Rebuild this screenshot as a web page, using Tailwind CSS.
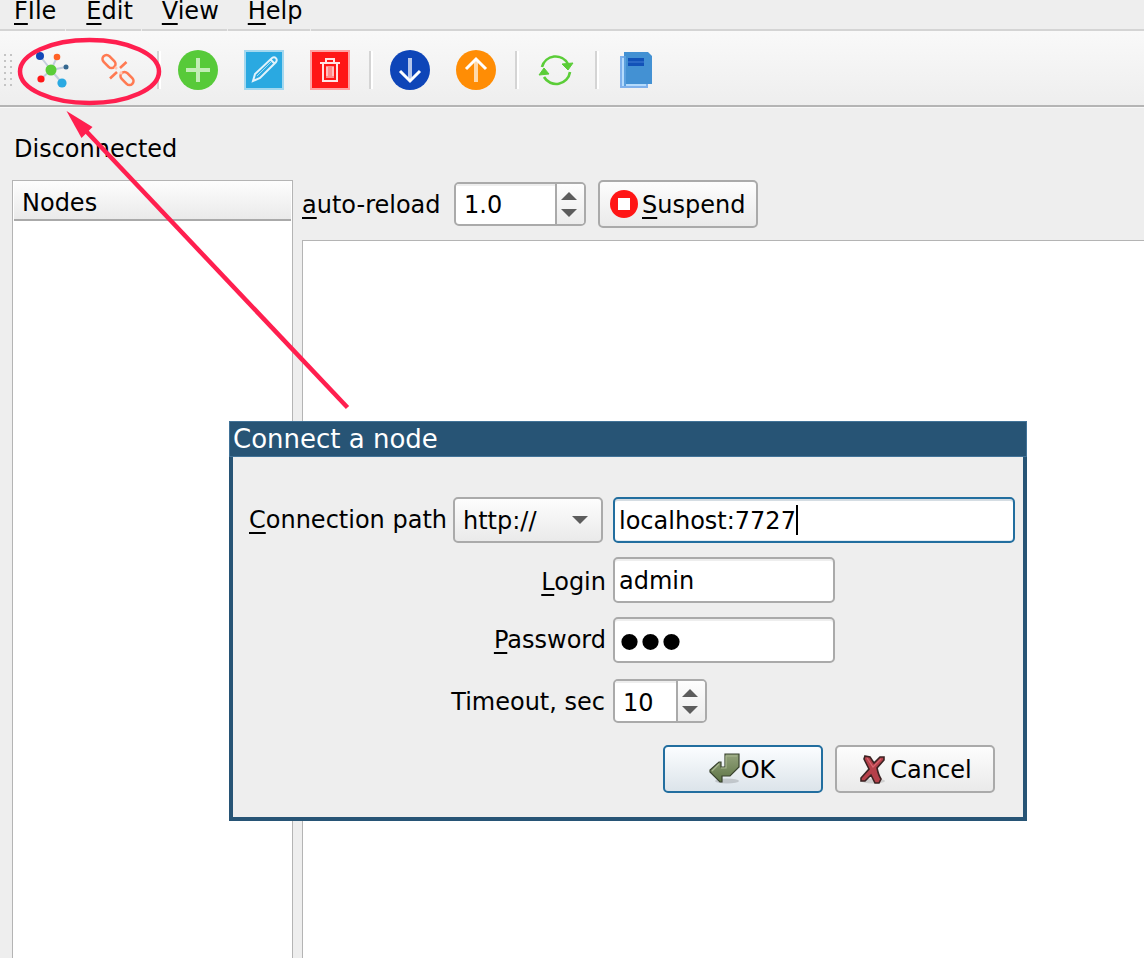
<!DOCTYPE html>
<html lang="en">
<head>
<meta charset="utf-8">
<title>Connect a node</title>
<script src="https://cdn.jsdelivr.net/npm/@tailwindcss/browser@4"></script>
</head>
<body class="relative flex h-screen flex-col overflow-hidden bg-[#eeeeee] font-['DejaVu_Sans',sans-serif] text-2xl leading-7 text-black">

<nav class="flex gap-px leading-[22px]">
  <button class="border-b-2 border-[#d4d4d4] pr-[9px] pb-[7px] pl-[14px]"><u class="decoration-2 underline-offset-4">F</u>Ile</button>
  <button class="border-b-2 border-[#d4d4d4] pr-2 pb-[7px] pl-5"><u class="decoration-2 underline-offset-4">E</u>dit</button>
  <button class="border-b-2 border-[#d4d4d4] pr-2 pb-[7px] pl-5"><u class="decoration-2 underline-offset-4">V</u>iew</button>
  <button class="border-b-2 border-[#d4d4d4] pr-2 pb-[7px] pl-5"><u class="decoration-2 underline-offset-4">H</u>elp</button>
  <span class="flex-1 border-b-2 border-[#d4d4d4]"></span>
</nav>

<div role="toolbar" class="flex h-[76px] shrink-0 items-center border-b-2 border-[#b4b4b4] bg-linear-to-b from-[#f9f9f9] to-[#eeeeee] pt-[3px]">
  <svg class="h-8 w-[19px]" viewBox="0 0 19 32" fill="#c4c4c4"><defs><pattern id="grip" x="4" width="6" height="6" patternUnits="userSpaceOnUse"><rect width="2" height="2"/></pattern></defs><rect x="4" width="8" height="32" fill="url(#grip)"/></svg>
  <button aria-label="Connect" class="flex w-[66px] justify-center">
    <svg width="40" height="40" viewBox="0 0 40 40"><path d="M8 6l11 14M25 7l-6 13M34 17l-15 3M9 29l10-9M30 33L19 20" stroke="#c3cddd" stroke-width="2"/><circle cx="19" cy="20" r="5.5" fill="#5bcd38"/><circle cx="8" cy="6" r="4" fill="#1247b8"/><circle cx="25" cy="7" r="3.3" fill="#ff6126"/><circle cx="34" cy="17" r="2.5" fill="#35688f"/><circle cx="9" cy="29" r="3.6" fill="#ff1616"/><circle cx="30" cy="33" r="4.6" fill="#2aa9e2"/></svg>
  </button>
  <button aria-label="Disconnect" class="flex w-[66px] justify-center">
    <svg width="40" height="40" viewBox="0 0 40 40" fill="none" stroke="#ff7a52" stroke-width="2.6"><rect x="3.500" y="7.500" width="15" height="8" rx="4" transform="rotate(45 11 11.500)"/><rect x="21.500" y="24.500" width="15" height="8" rx="4" transform="rotate(45 29 28.500)"/><path d="M28.500 12L22 18M19 22l-7 6.500"/><path d="M17 17l2 2M22 22l2 2" stroke="#ffc9b8"/></svg>
  </button>
  <span class="mx-[6px] mr-1 h-[38px] w-1 border-r-2 border-l-2 border-r-white border-l-[#d4d4d4]"></span>
  <button aria-label="Add" class="flex w-[66px] justify-center">
    <svg width="40" height="40" viewBox="0 0 40 40"><circle cx="20" cy="20" r="20" fill="#57ca39"/><path d="M20 8v24M8 20h24" stroke="#c2edb6" stroke-width="4"/></svg>
  </button>
  <button aria-label="Edit" class="flex w-[66px] justify-center">
    <svg width="40" height="40" viewBox="0 0 40 40"><path d="M0 0h40v40H0z" fill="#a4d8ef"/><path d="M2 2h36v36H2z" fill="#2aa9e1"/><path d="M9 31l2-7L28 8c3-2 6 1 4 4L16 28zM26 9l5 5" fill="none" stroke="#e2f3fb" stroke-width="2"/><path d="M13 26l14-14" stroke="#a4d8ef"/></svg>
  </button>
  <button aria-label="Delete" class="flex w-[66px] justify-center">
    <svg width="40" height="40" viewBox="0 0 40 40"><path d="M0 0h40v40H0z" fill="#ffa2a2"/><path d="M2 2h36v36H2z" fill="#ff1616"/><path d="M16 16h8v12h-8z" fill="#ff8c8c"/><path d="M10 13h20M16 12V9h8v3M13 13v18h14V13" fill="none" stroke="#ffe3e3" stroke-width="2"/><path d="M17 17v9M23 17v9" stroke="#ffc0c0" stroke-width="2"/></svg>
  </button>
  <span class="mx-[6px] mr-1 h-[38px] w-1 border-r-2 border-l-2 border-r-white border-l-[#d4d4d4]"></span>
  <button aria-label="Download" class="flex w-[66px] justify-center">
    <svg width="40" height="40" viewBox="0 0 40 40" fill="none"><circle cx="20" cy="20" r="20" fill="#0e45b8"/><path d="M20 8v22" stroke="#b5c5ea" stroke-width="4"/><path d="M10 21l10 10 10-10" stroke="#fff" stroke-width="3"/></svg>
  </button>
  <button aria-label="Upload" class="flex w-[66px] justify-center">
    <svg width="40" height="40" viewBox="0 0 40 40" fill="none"><circle cx="20" cy="20" r="20" fill="#ff8d05"/><path d="M20 10v22" stroke="#ffd9aa" stroke-width="4"/><path d="M10 19L20 9l10 10" stroke="#fff" stroke-width="3"/></svg>
  </button>
  <span class="mx-[6px] mr-1 h-[38px] w-1 border-r-2 border-l-2 border-r-white border-l-[#d4d4d4]"></span>
  <button aria-label="Refresh" class="flex w-[66px] justify-center">
    <svg width="40" height="40" viewBox="0 0 40 40" fill="none"><path d="M6 17a14 14 0 0 1 26-3M34 22a14 14 0 0 1-26 5" stroke="#5bcd38" stroke-width="2.6"/><path d="M26 14l11-1-5 7zM3 25l5-7 5 6z" fill="#5bcd38" stroke="#5bcd38"/></svg>
  </button>
  <span class="mx-[6px] mr-1 h-[38px] w-1 border-r-2 border-l-2 border-r-white border-l-[#d4d4d4]"></span>
  <button aria-label="Manual" class="flex w-[66px] justify-center">
    <svg width="40" height="40" viewBox="0 0 40 40"><path d="M4 6h28v32H4z" fill="#7fb1ec"/><path d="M6 8h24v28H6z" fill="#b5dbfc"/><path d="M8 2h24l4 4v28H8z" fill="#4391d3"/><path d="M8 6h2v30H8z" fill="#5ba0de"/><path d="M12 8h16v8H12z" fill="#1252b8"/><path d="M12 11h16v2H12z" fill="#2a68c6"/></svg>
  </button>
</div>

<main class="flex min-h-0 flex-1 flex-col border-t border-[#f8f8f8] pt-[27px] pl-3">
  <p class="pl-[2px]">Disconnected</p>
  <div class="mt-[17px] flex min-h-0 flex-1 gap-[9px]">
    <section class="w-[281px] shrink-0 border border-b-0 border-[#b4b4b4] bg-white px-px">
      <h2 class="border-b-2 border-[#aaaaaa] bg-linear-to-b from-[#fdfdfd] to-[#eaeaea] pt-2 pb-[2px] pl-2">Nodes</h2>
    </section>
    <section class="flex min-w-0 flex-1 flex-col">
      <div class="flex h-12 shrink-0 items-center">
        <label for="reload" class="w-[152px] pt-[2px]"><u class="decoration-2 underline-offset-4">a</u>uto-reload</label>
        <div class="flex h-11 w-[132px] overflow-hidden rounded-[5px] border-2 border-[#aaaaaa] bg-white">
          <input id="reload" type="number" step="0.1" value="1.0" class="min-w-0 flex-1 border-t-2 border-[#eeeeee] pl-2 outline-none [appearance:textfield]">
          <div class="flex w-[29px] flex-col items-center justify-center gap-[9px] border-l-2 border-[#aaaaaa] bg-linear-to-b from-[#fdfdfd] to-[#ececec] pr-[3px]">
            <button aria-label="Increase"><svg class="block" width="16" height="8" fill="#5c5c5c"><path d="M0 8L8 0l8 8z"/></svg></button>
            <button aria-label="Decrease"><svg class="block" width="16" height="8" fill="#5c5c5c"><path d="M0 0h16L8 8z"/></svg></button>
          </div>
        </div>
        <button class="ml-3 flex h-12 w-40 items-center gap-1 rounded-[5px] border-2 border-[#aaaaaa] bg-linear-to-b from-[#fdfdfd] to-[#eaeaea] pl-[10px]">
          <svg width="28" height="28" viewBox="0 0 28 28"><circle cx="14" cy="14" r="14" fill="#ff1616"/><path d="M8 8h12v12H8z" fill="#fff"/></svg>
          <span class="pt-[2px]"><u class="decoration-2 underline-offset-4">S</u>uspend</span>
        </button>
      </div>
      <div class="mt-3 flex-1 border-t border-l border-[#b4b4b4] bg-white"></div>
    </section>
  </div>
</main>

<!-- Annotation marking the connect buttons -->
<svg class="pointer-events-none absolute top-0 left-0" width="400" height="420" viewBox="0 0 400 420" fill="none" stroke="#ff1f4f" stroke-width="4.5">
  <ellipse cx="89.5" cy="71.5" rx="69.5" ry="31.5"/>
  <path d="M86 131L347.500 407.500"/>
  <path d="M66.500 111L92.500 127 81.500 138z" fill="#ff1f4f" stroke="none"/>
</svg>

<form role="dialog" aria-labelledby="dialog-title" class="absolute top-[421px] left-[229px] w-[798px] border-4 border-t-0 border-[#275475] bg-[#eeeeee] pb-6">
  <h1 id="dialog-title" class="-mx-1 border border-[#427398] bg-[#275475] pl-[3px] text-[26px] leading-[34px] text-white">Connect a node</h1>
  <div class="mt-10 grid grid-cols-[380px_1fr] items-center gap-y-[14px] pr-2">
    <div class="flex items-center justify-end pr-[10px]">
      <label for="scheme"><u class="decoration-2 underline-offset-4">C</u>onnection path</label>
      <div class="relative ml-[6px]">
        <select id="scheme" class="block h-[46px] w-[150px] appearance-none rounded-[5px] border-2 border-[#aaaaaa] bg-linear-to-b from-[#fdfdfd] to-[#eaeaea] pt-px pl-2 outline-none"><option>http://</option><option>https://</option></select>
        <svg class="pointer-events-none absolute top-[19px] right-[15px]" width="16" height="8" fill="#5c5c5c"><path d="M0 0h16L8 8z"/></svg>
      </div>
    </div>
    <div class="relative">
      <input type="text" aria-label="Host" value="localhost:7727" class="block h-[46px] w-full rounded-[5px] border-2 border-[#226e9f] bg-white pt-px pl-1 outline-none inset-shadow-[0_2px_#d5dde3,0_-1px_#e4edf3]">
      <span class="absolute top-2 left-[183px] h-[30px] w-[2px] bg-black"></span>
    </div>

    <label for="login" class="pt-1 pr-[7px] text-right"><u class="decoration-2 underline-offset-4">L</u>ogin</label>
    <input id="login" type="text" value="admin" class="h-[46px] w-[222px] rounded-[5px] border-2 border-[#aaaaaa] bg-white pt-px pl-1 outline-none inset-shadow-[0_2px_#eeeeee]">

    <label for="password" class="pr-[7px] text-right"><u class="decoration-2 underline-offset-4">P</u>assword</label>
    <input id="password" type="password" value="abc" class="h-[46px] w-[222px] rounded-[5px] border-2 border-[#aaaaaa] bg-white pt-[2px] pl-1 font-['Liberation_Sans',sans-serif] text-6xl outline-none inset-shadow-[0_2px_#eeeeee]">

    <label for="timeout" class="pt-1 pr-2 text-right">Timeout, sec</label>
    <div class="mt-[2px] flex h-11 w-[94px] overflow-hidden rounded-[5px] border-2 border-[#aaaaaa] bg-white">
      <input id="timeout" type="number" value="10" class="min-w-0 flex-1 border-t-2 border-[#eeeeee] pt-px pl-2 outline-none [appearance:textfield]">
      <div class="flex w-[29px] flex-col items-center justify-center gap-[9px] border-l-2 border-[#aaaaaa] bg-linear-to-b from-[#fdfdfd] to-[#ececec] pr-[3px]">
        <button type="button" aria-label="Increase timeout"><svg class="block" width="16" height="8" fill="#5c5c5c"><path d="M0 8L8 0l8 8z"/></svg></button>
        <button type="button" aria-label="Decrease timeout"><svg class="block" width="16" height="8" fill="#5c5c5c"><path d="M0 0h16L8 8z"/></svg></button>
      </div>
    </div>
  </div>
  <div class="mt-[22px] flex justify-end gap-3 pr-7">
    <button type="button" class="flex h-12 w-40 items-center justify-center rounded-[5px] border-2 border-[#226e9f] bg-linear-to-b from-[#fbfdff] to-[#dce4ea] pr-[2px]">
      <svg width="32" height="32" viewBox="0 0 32 32"><defs><linearGradient id="leaf" x2="0" y2="1"><stop stop-color="#94a37c"/><stop offset="1" stop-color="#5d7445"/></linearGradient></defs><ellipse cx="18" cy="28" rx="12" ry="2.500" fill="#000" opacity=".15"/><path d="M16 1h14v13l-9 9h-8v6h-2L1 19v-2l9-8h2v5h4z" fill="url(#leaf)" stroke="#39432f" stroke-width="1.200"/><path d="M3 18l7-7M12 15h5V3h11" fill="none" stroke="#a8b68f" stroke-width="1.200"/></svg>
      <span class="pt-px">OK</span>
    </button>
    <button type="button" class="flex h-12 w-40 items-center justify-center rounded-[5px] border-2 border-[#aaaaaa] bg-linear-to-b from-[#fdfdfd] to-[#eaeaea]">
      <svg width="32" height="32" viewBox="0 0 32 32"><ellipse cx="15" cy="28" rx="12" ry="2.500" fill="#000" opacity=".13"/><path d="M7 3l5 1 4 6 6-6h4v3l-7 8c1 5 2 8 4 11l-2 4h-4l-4-8-6 6H3v-3l8-9-5-10z" fill="#b5404a" stroke="#3b2323" stroke-width="1.600"/><path d="M9 5l6 9 8-8" fill="none" stroke="#d86670" stroke-width="1.200"/></svg>
      <span class="pt-px">Cancel</span>
    </button>
  </div>
</form>
</body>
</html>
